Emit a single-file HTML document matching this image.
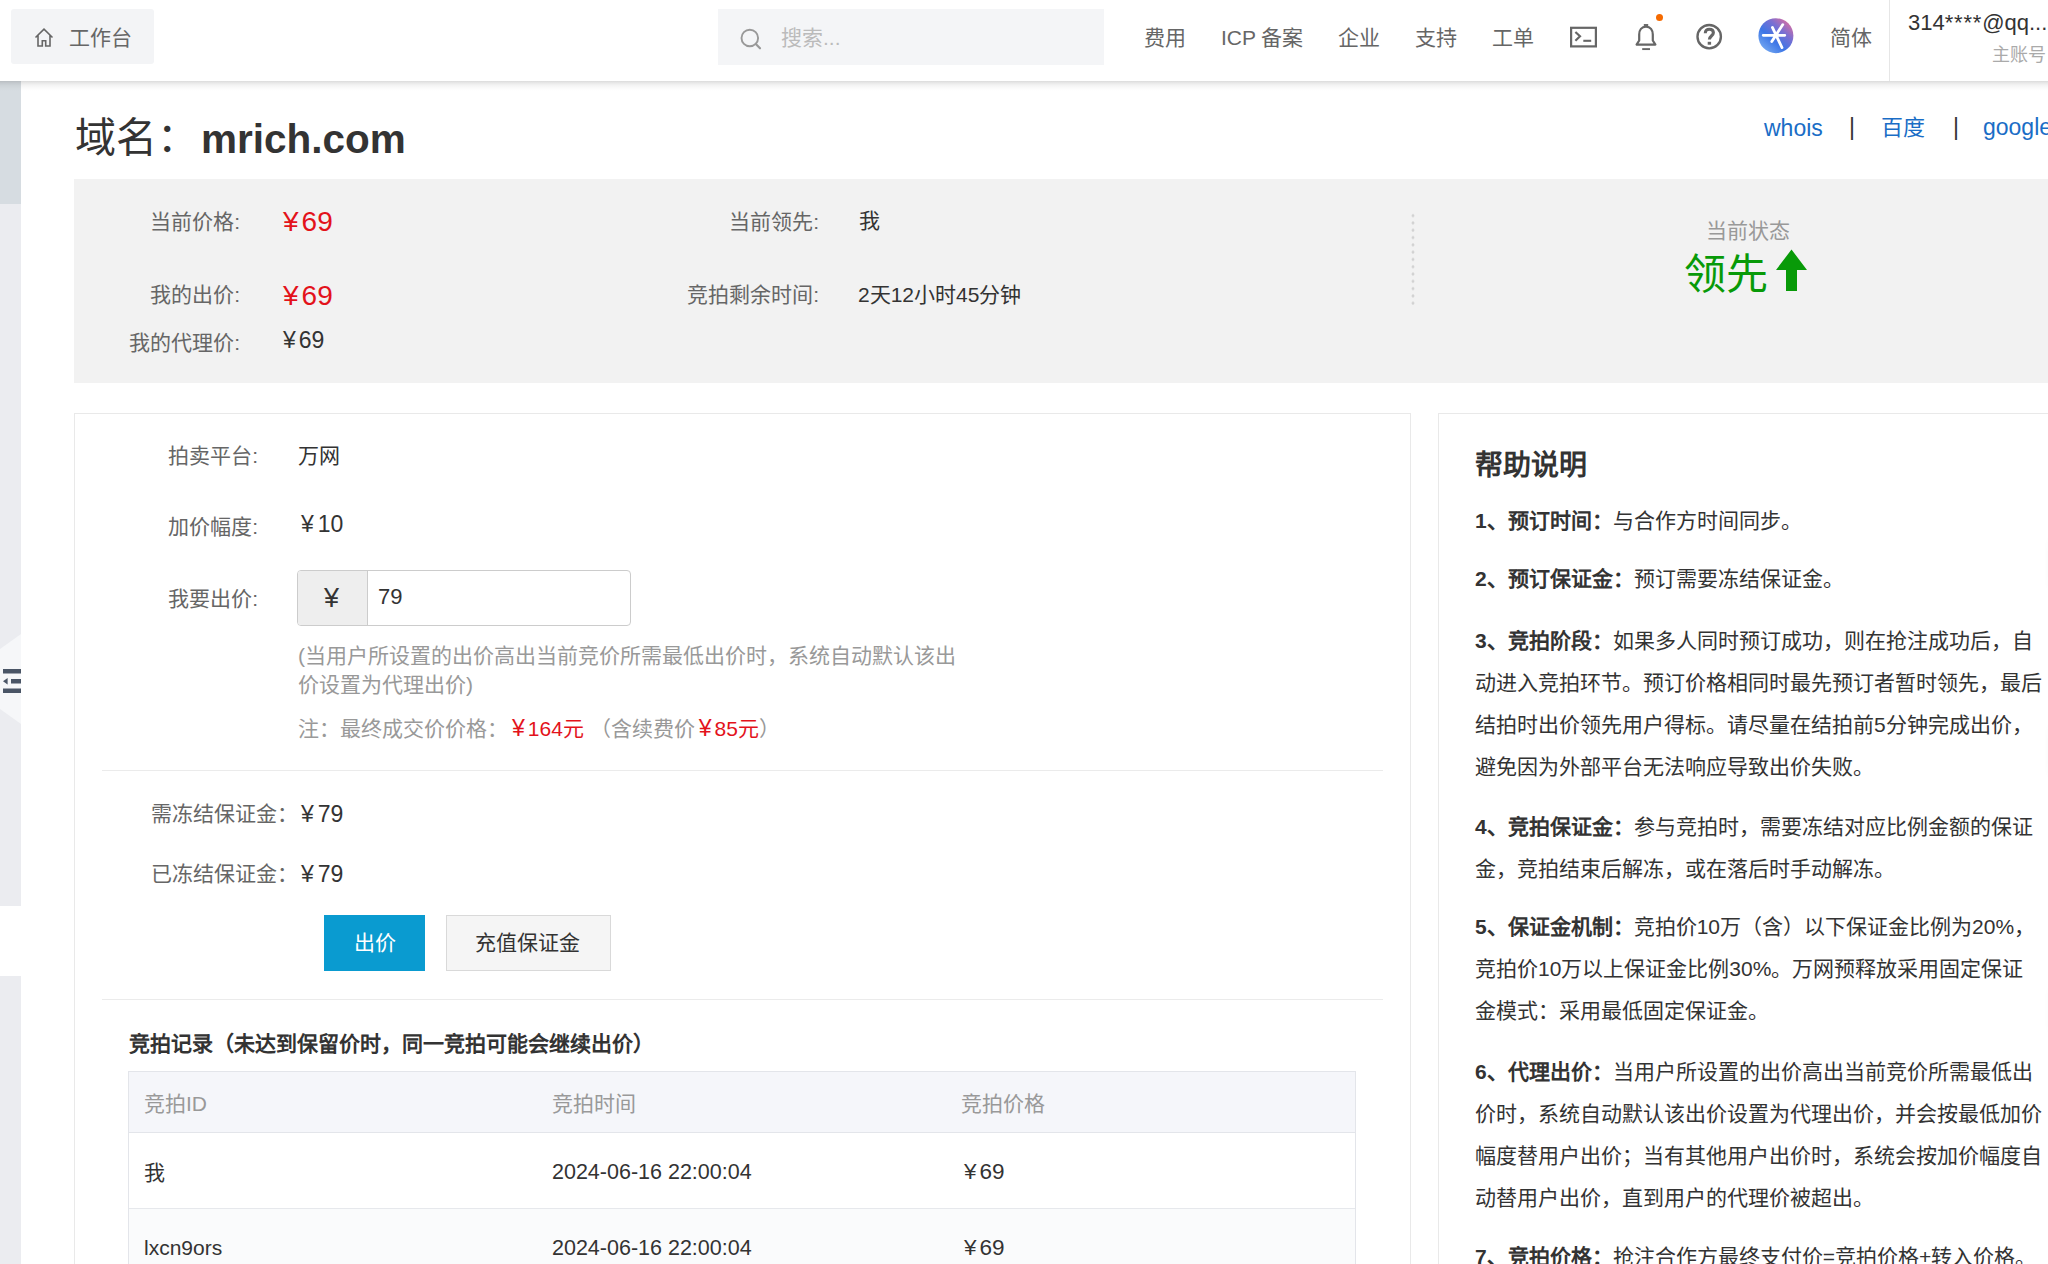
<!DOCTYPE html>
<html lang="zh-CN"><head><meta charset="utf-8">
<style>
html,body{margin:0;padding:0;width:2048px;height:1264px;overflow:hidden;background:#fff;}
body{font-family:"Liberation Sans",sans-serif;color:#333;position:relative;}
.a{position:absolute;white-space:nowrap;}
.f21{font-size:21px;line-height:21px;}
.lbl{color:#666;text-align:right;}
.nav{position:absolute;left:0;top:0;width:2048px;height:81px;background:#fff;z-index:5;}
.nsh{position:absolute;left:0;top:81px;width:2048px;height:10px;z-index:5;background:linear-gradient(to bottom,rgba(0,0,0,0.14),rgba(0,0,0,0.085) 20%,rgba(0,0,0,0.045) 45%,rgba(0,0,0,0.015) 75%,rgba(0,0,0,0));}
.navt{font-size:21px;line-height:21px;color:#666;}
.y{margin-right:3px;font-size:1.1em;}
.box{position:absolute;border:1px solid #e9e9e9;background:#fff;}
.red{color:#e3121b;}
.p{position:absolute;left:1475px;width:580px;font-size:21px;line-height:42px;color:#333;white-space:nowrap;}
.p b{font-weight:bold;}
</style></head><body>

<!-- left strip -->
<div class="a" style="left:0;top:81px;width:21px;height:123px;background:#d6dce1;"></div>
<div class="a" style="left:0;top:204px;width:21px;height:702px;background:#ebecf0;"></div>
<div class="a" style="left:0;top:976px;width:21px;height:300px;background:#ebecf0;"></div>

<!-- nav -->
<div class="nav">
  <div class="a" style="left:11px;top:9px;width:143px;height:55px;background:#f3f4f6;border-radius:3px;"></div>
  <svg class="a" style="left:33px;top:27px" width="22" height="21" viewBox="0 0 22 21"><path d="M2.5 10.5 L11 2.2 L19.5 10.5 M5 8.5 V19 H9.3 V13.8 H12.7 V19 H17 V8.5" fill="none" stroke="#666" stroke-width="1.6" stroke-linejoin="miter"/></svg>
  <div class="a navt" style="left:69px;top:27px;">工作台</div>

  <div class="a" style="left:718px;top:9px;width:386px;height:56px;background:#f4f5f7;"></div>
  <svg class="a" style="left:740px;top:28px" width="22" height="23" viewBox="0 0 22 23"><circle cx="9.8" cy="10" r="8.3" fill="none" stroke="#999" stroke-width="1.9"/><path d="M15.8 16 L20 20.3" stroke="#999" stroke-width="2.2" stroke-linecap="round"/></svg>
  <div class="a navt" style="left:781px;top:27px;color:#bbb;">搜索...</div>

  <div class="a navt" style="left:1144px;top:27px;">费用</div>
  <div class="a navt" style="left:1221px;top:27px;">ICP 备案</div>
  <div class="a navt" style="left:1338px;top:27px;">企业</div>
  <div class="a navt" style="left:1415px;top:27px;">支持</div>
  <div class="a navt" style="left:1492px;top:27px;">工单</div>

  <svg class="a" style="left:1569px;top:26px" width="29" height="22" viewBox="0 0 29 22"><rect x="2.1" y="1.8" width="24.8" height="18.6" fill="none" stroke="#666" stroke-width="2.2"/><path d="M6.4 6 L11 10.3 L6.4 14.8" fill="none" stroke="#666" stroke-width="2.2"/><path d="M14.3 14.8 H22.2" stroke="#666" stroke-width="2.1"/></svg>
  <svg class="a" style="left:1634px;top:22px" width="24" height="29" viewBox="0 0 24 29"><path d="M12 4.6 C7.6 4.6 5.2 8 5.2 12.5 V18.5 L2.6 22.6 H21.4 L18.8 18.5 V12.5 C18.8 8 16.4 4.6 12 4.6 Z" fill="none" stroke="#666" stroke-width="2.2" stroke-linejoin="round"/><path d="M9.8 3 H14.2" stroke="#666" stroke-width="1.9"/><path d="M8.2 27.1 H16" stroke="#666" stroke-width="1.9"/></svg>
  <div class="a" style="left:1656px;top:14px;width:7px;height:7px;border-radius:50%;background:#f56a00;"></div>
  <svg class="a" style="left:1695px;top:23px" width="28" height="28" viewBox="0 0 28 28"><circle cx="14.2" cy="13.7" r="11.7" fill="none" stroke="#666" stroke-width="2.4"/><path d="M10.3 10.2 C10.3 7.4 12 6.2 14.3 6.2 C16.8 6.2 18.4 7.7 18.4 9.8 C18.4 12.6 14.4 13 14.4 16.6" fill="none" stroke="#666" stroke-width="3.1"/><rect x="12.7" y="18.8" width="3.4" height="2.9" fill="#666"/></svg>
  <svg class="a" style="left:1758px;top:18px" width="36" height="36" viewBox="0 0 36 36"><defs><linearGradient id="ag" x1="0.1" y1="0.95" x2="0.9" y2="0.05"><stop offset="0" stop-color="#7aaef2"/><stop offset="0.38" stop-color="#3d76e6"/><stop offset="0.68" stop-color="#7a6fd2"/><stop offset="1" stop-color="#e46e9c"/></linearGradient></defs><circle cx="17.9" cy="17.7" r="17.5" fill="url(#ag)"/><path d="M5.2 17.3 H26.8 M24.8 6.6 L13.8 23.6 M14.4 9.4 L24 29.6" stroke="#fff" stroke-width="2.8" stroke-linecap="round"/></svg>
  <div class="a navt" style="left:1830px;top:27px;">简体</div>
  <div class="a" style="left:1889px;top:0;width:1px;height:81px;background:#e6e6e6;"></div>
  <div class="a" style="left:1908px;top:12px;font-size:22px;line-height:22px;color:#333;">314<span style="letter-spacing:0.8px">****</span>@qq...</div>
  <div class="a" style="left:1992px;top:46px;font-size:18px;line-height:18px;color:#aaa;">主账号</div>
</div>

<div class="nsh"></div>
<!-- title -->
<div class="a" style="left:75px;top:118px;font-size:41px;line-height:41px;color:#333;">域名：</div>
<div class="a" style="left:201px;top:119px;font-size:40.5px;line-height:40.5px;color:#333;font-weight:bold;">mrich.com</div>

<div class="a" style="left:1764px;top:117px;font-size:23px;line-height:23px;color:#1a6dc6;">whois</div>
<div class="a" style="left:1849px;top:116px;font-size:23px;line-height:23px;color:#333;">|</div>
<div class="a" style="left:1881px;top:117px;font-size:22px;line-height:22px;color:#1a6dc6;">百度</div>
<div class="a" style="left:1953px;top:116px;font-size:23px;line-height:23px;color:#333;">|</div>
<div class="a" style="left:1983px;top:116px;font-size:23px;line-height:23px;color:#1a6dc6;">google</div>

<!-- gray status box -->
<div class="a" style="left:74px;top:179px;width:2010px;height:204px;background:#f2f2f2;"></div>
<div class="a f21 lbl" style="left:40px;width:200px;top:211px;">当前价格:</div>
<div class="a f21 lbl" style="left:40px;width:200px;top:284px;">我的出价:</div>
<div class="a f21 lbl" style="left:40px;width:200px;top:332px;">我的代理价:</div>
<div class="a red" style="left:283px;top:208px;font-size:28px;line-height:28px;"><span style="margin-right:3px">¥</span>69</div>
<div class="a red" style="left:283px;top:282px;font-size:28px;line-height:28px;"><span style="margin-right:3px">¥</span>69</div>
<div class="a" style="left:283px;top:329px;font-size:23px;line-height:23px;color:#333;"><span style="margin-right:3px">¥</span>69</div>

<div class="a f21 lbl" style="left:619px;width:200px;top:211px;">当前领先:</div>
<div class="a f21 lbl" style="left:619px;width:200px;top:284px;">竞拍剩余时间:</div>
<div class="a f21" style="left:859px;top:210px;color:#333;">我</div>
<div class="a f21" style="left:858px;top:284px;color:#333;">2天12小时45分钟</div>

<div class="a" style="left:1411px;top:212px;width:4px;height:94px;background-image:radial-gradient(circle,#d2d2d2 1.25px,transparent 1.7px);background-size:4px 7.3px;"></div>
<div class="a f21" style="left:1706px;top:220px;color:#999;">当前状态</div>
<div class="a" style="left:1684px;top:254px;font-size:42px;line-height:42px;color:#089a08;">领先</div>
<svg class="a" style="left:1775px;top:249px" width="33" height="43" viewBox="0 0 33 43"><path d="M16.5 0.5 L32 21 H22 V42 H11 V21 H1 Z" fill="#089a08"/></svg>

<!-- left panel -->
<div class="box" style="left:74px;top:413px;width:1335px;height:900px;"></div>
<div class="a f21 lbl" style="left:58px;width:200px;top:445px;">拍卖平台:</div>
<div class="a f21 lbl" style="left:58px;width:200px;top:516px;">加价幅度:</div>
<div class="a f21 lbl" style="left:58px;width:200px;top:588px;">我要出价:</div>
<div class="a f21" style="left:298px;top:445px;color:#333;">万网</div>
<div class="a" style="left:301px;top:513px;font-size:23px;line-height:23px;color:#333;"><span style="margin-right:4px">¥</span>10</div>

<div class="a" style="left:297px;top:570px;width:332px;height:54px;border:1px solid #ccc;border-radius:4px;background:#fff;overflow:hidden;">
  <div style="position:absolute;left:0;top:0;width:69px;height:54px;background:#eee;border-right:1px solid #ccc;"></div>
</div>
<div class="a" style="left:324px;top:585px;font-size:27px;line-height:27px;color:#333;">¥</div>
<div class="a" style="left:378px;top:586px;font-size:22px;line-height:22px;color:#333;">79</div>

<div class="a f21" style="left:298px;top:645px;color:#999;">(当用户所设置的出价高出当前竞价所需最低出价时，系统自动默认该出</div>
<div class="a f21" style="left:298px;top:674px;color:#999;">价设置为代理出价)</div>
<div class="a f21" style="left:298px;top:718px;color:#999;">注：最终成交价价格：<span class="red" style="margin-left:4px"><span class="y">¥</span>164元</span> （含续费价<span class="red" style="margin-left:4px"><span class="y">¥</span>85元</span>）</div>

<div class="a" style="left:102px;top:770px;width:1281px;height:1px;background:#ebebeb;"></div>

<div class="a f21" style="left:151px;top:803px;color:#666;">需冻结保证金：</div>
<div class="a f21" style="left:151px;top:863px;color:#666;">已冻结保证金：</div>
<div class="a" style="left:301px;top:803px;font-size:23px;line-height:23px;color:#333;"><span style="margin-right:4px">¥</span>79</div>
<div class="a" style="left:301px;top:863px;font-size:23px;line-height:23px;color:#333;"><span style="margin-right:4px">¥</span>79</div>

<div class="a" style="left:324px;top:915px;width:101px;height:56px;background:#0a9bd0;"></div>
<div class="a f21" style="left:354px;top:932px;color:#fff;">出价</div>
<div class="a" style="left:446px;top:915px;width:163px;height:54px;background:#f5f5f5;border:1px solid #d9d9d9;"></div>
<div class="a f21" style="left:475px;top:932px;color:#333;">充值保证金</div>

<div class="a" style="left:102px;top:999px;width:1281px;height:1px;background:#ebebeb;"></div>

<div class="a f21" style="left:129px;top:1033px;color:#333;font-weight:bold;">竞拍记录（未达到保留价时，同一竞拍可能会继续出价）</div>

<div class="a" style="left:128px;top:1071px;width:1226px;height:300px;border:1px solid #e3e5ea;background:#fff;"></div>
<div class="a" style="left:129px;top:1072px;width:1226px;height:60px;background:#f5f6fa;border-bottom:1px solid #e3e5ea;"></div>
<div class="a" style="left:129px;top:1208px;width:1226px;height:1px;background:#e6e8ec;"></div>
<div class="a" style="left:129px;top:1209px;width:1226px;height:60px;background:#fafbfc;"></div>
<div class="a f21" style="left:144px;top:1093px;color:#999;">竞拍ID</div>
<div class="a f21" style="left:552px;top:1093px;color:#999;">竞拍时间</div>
<div class="a f21" style="left:961px;top:1093px;color:#999;">竞拍价格</div>
<div class="a f21" style="left:144px;top:1162px;color:#333;">我</div>
<div class="a" style="left:552px;top:1162px;font-size:21.5px;line-height:21.5px;color:#333;">2024-06-16 22:00:04</div>
<div class="a" style="left:964px;top:1161px;font-size:22.5px;line-height:22.5px;color:#333;"><span style="margin-right:3px">¥</span>69</div>
<div class="a f21" style="left:144px;top:1237px;color:#333;">lxcn9ors</div>
<div class="a" style="left:552px;top:1238px;font-size:21.5px;line-height:21.5px;color:#333;">2024-06-16 22:00:04</div>
<div class="a" style="left:964px;top:1237px;font-size:22.5px;line-height:22.5px;color:#333;"><span style="margin-right:3px">¥</span>69</div>

<!-- right panel -->
<div class="box" style="left:1438px;top:413px;width:660px;height:900px;"></div>
<div class="a" style="left:1475px;top:452px;font-size:28px;line-height:28px;color:#333;font-weight:bold;">帮助说明</div>

<div class="p" style="top:500px;"><b>1、预订时间：</b>与合作方时间同步。</div>
<div class="p" style="top:558px;"><b>2、预订保证金：</b>预订需要冻结保证金。</div>
<div class="p" style="top:620px;"><b>3、竞拍阶段：</b>如果多人同时预订成功，则在抢注成功后，自<br>动进入竞拍环节。预订价格相同时最先预订者暂时领先，最后<br>结拍时出价领先用户得标。请尽量在结拍前5分钟完成出价，<br>避免因为外部平台无法响应导致出价失败。</div>
<div class="p" style="top:806px;"><b>4、竞拍保证金：</b>参与竞拍时，需要冻结对应比例金额的保证<br>金，竞拍结束后解冻，或在落后时手动解冻。</div>
<div class="p" style="top:906px;"><b>5、保证金机制：</b>竞拍价10万（含）以下保证金比例为20%，<br>竞拍价10万以上保证金比例30%。万网预释放采用固定保证<br>金模式：采用最低固定保证金。</div>
<div class="p" style="top:1051px;"><b>6、代理出价：</b>当用户所设置的出价高出当前竞价所需最低出<br>价时，系统自动默认该出价设置为代理出价，并会按最低加价<br>幅度替用户出价；当有其他用户出价时，系统会按加价幅度自<br>动替用户出价，直到用户的代理价被超出。</div>
<div class="p" style="top:1236px;"><b>7、竞拍价格：</b>抢注合作方最终支付价=竞拍价格+转入价格。</div>

<!-- right edge floating shadows -->
<div class="a" style="left:2052px;top:537px;width:40px;height:54px;border-radius:8px;box-shadow:0 0 10px rgba(0,0,0,0.07);"></div>
<div class="a" style="left:2052px;top:724px;width:40px;height:54px;border-radius:8px;box-shadow:0 0 10px rgba(0,0,0,0.07);"></div>
<div class="a" style="left:2052px;top:986px;width:40px;height:48px;border-radius:8px;box-shadow:0 0 10px rgba(0,0,0,0.06);"></div>
<!-- sidebar toggle -->
<svg class="a" style="left:0;top:634px" width="21" height="90" viewBox="0 0 21 90"><path d="M21 0 V90 L0 75 V15 Z" fill="#f6f7f9"/><rect x="3" y="35" width="18" height="4.5" fill="#4a5566"/><rect x="11" y="45" width="10" height="4.5" fill="#4a5566"/><path d="M3 47.2 L7.6 44 V50.4 Z" fill="#4a5566"/><rect x="3" y="54.5" width="18" height="4.5" fill="#4a5566"/></svg>

</body></html>
